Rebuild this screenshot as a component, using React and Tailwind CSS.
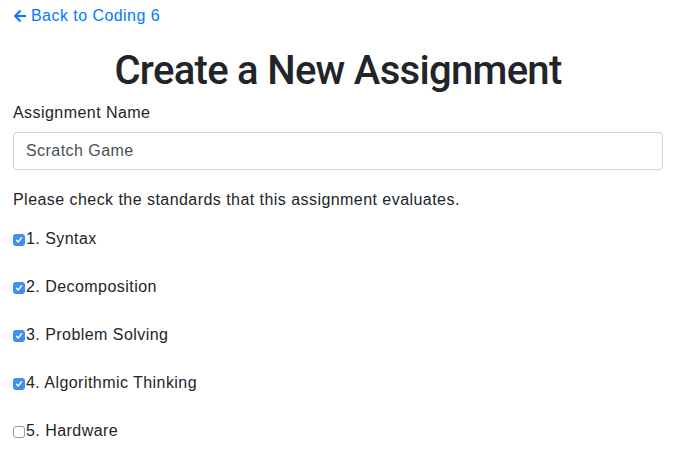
const standards = [
  { id: 1, name: 'Syntax', checked: true },
  { id: 2, name: 'Decomposition', checked: true },
  { id: 3, name: 'Problem Solving', checked: true },
  { id: 4, name: 'Algorithmic Thinking', checked: true },
  { id: 5, name: 'Hardware', checked: false },
]

// macOS風のチェックボックス
const Check = ({ checked }) =>
  checked ? (
    <span className="inline-flex w-[12px] h-[12px] mt-[2px] rounded-[3px] bg-[#3d8ff5] items-center justify-center shrink-0">
      <svg width="8" height="8" viewBox="0 0 8 8">
        <path d="M1.5 4.2 L3.2 6 L6.5 1.8" fill="none" stroke="white" strokeWidth="1.4" strokeLinecap="round" strokeLinejoin="round" />
      </svg>
    </span>
  ) : (
    <span className="inline-block w-[12px] h-[12px] mt-[2px] rounded-[3px] border border-[#9a9a9a] bg-white shrink-0"></span>
  )

export default function App() {
  return (
    <div className="w-[676px] h-[456px] bg-white px-[13px] pt-[4px] text-[16px] leading-[24px] tracking-[0.45px] text-[#212529] font-['Liberation_Sans',Arial,sans-serif]">
      <a className="flex items-center gap-[4px] text-[#007bff] h-[24px]">
        <svg width="14" height="14" viewBox="0 0 448 512" fill="#007bff">
          <path d="M257.5 445.1l-22.2 22.2c-9.4 9.4-24.6 9.4-33.9 0L7 273c-9.4-9.4-9.4-24.6 0-33.9L201.4 44.7c9.4-9.4 24.6-9.4 33.9 0l22.2 22.2c9.5 9.5 9.3 25-.4 34.3L136.6 216H424c13.3 0 24 10.7 24 24v32c0 13.3-10.7 24-24 24H136.6l120.5 114.8c9.8 9.3 10 24.8.4 34.3z" />
        </svg>
        <span>Back to Coding 6</span>
      </a>

      <h1 className="mt-[19px] mb-[6px] text-center text-[40px] leading-[48px] font-medium tracking-[-0.7px] font-['Roboto',sans-serif]">Create a New Assignment</h1>

      <div className="mb-[18px]">
        <label className="block mb-[7px]">Assignment Name</label>
        <input
          defaultValue="Scratch Game"
          className="block w-full h-[38px] px-[12px] border border-[#ced4da] rounded-[4px] text-[#495057] outline-none tracking-[0.45px]"
        />
      </div>

      <p className="mb-[15px]">Please check the standards that this assignment evaluates.</p>

      <div className="flex flex-col gap-[24px]">
        {standards.map(s => (
          <label key={s.id} className="flex items-center h-[24px]">
            <Check checked={s.checked} />
            <span className="ml-[1px]">{s.id}. {s.name}</span>
          </label>
        ))}
      </div>
    </div>
  )
}
